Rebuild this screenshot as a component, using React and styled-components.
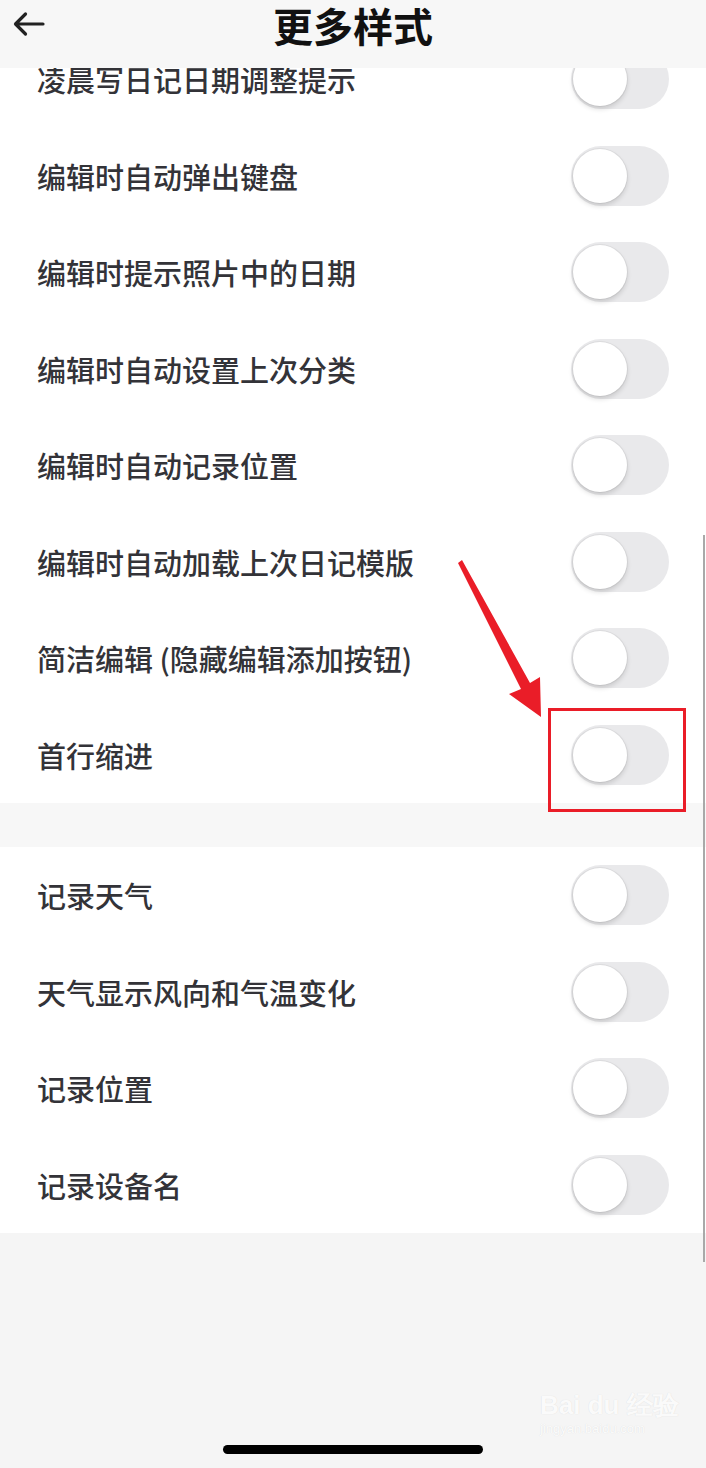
import styled, { createGlobalStyle } from "styled-components";

const Global = createGlobalStyle`
  html, body {
    margin: 0;
    padding: 0;
    background: #f5f5f5;
  }
  * {
    box-sizing: border-box;
  }
`;

const Screen = styled.div`
  position: relative;
  width: 706px;
  height: 1468px;
  overflow: hidden;
  background: #f5f5f5;
  font-family: "Noto Sans CJK SC", "Noto Sans", sans-serif;
  display: flex;
  flex-direction: column;
`;

const Header = styled.header`
  position: relative;
  z-index: 2;
  flex: 0 0 68px;
  height: 68px;
  background: #f7f7f7;
  display: flex;
  align-items: flex-start;
  justify-content: center;
  padding-top: 4px;
`;

const Back = styled.button`
  position: absolute;
  left: 10px;
  top: 6px;
  width: 36px;
  height: 36px;
  padding: 0;
  border: none;
  background: transparent;
  display: flex;
  align-items: center;
  justify-content: center;
`;

const Title = styled.h1`
  margin: 0;
  font-size: 40px;
  font-weight: 700;
  color: #111;
  line-height: 42px;
`;

const Body = styled.div`
  flex: 1;
  overflow: hidden;
  display: flex;
  flex-direction: column;
`;

const Section = styled.section`
  background: #fff;
  margin-top: ${(p) => p.$offset || 0}px;
`;

const Gap = styled.div`
  height: 44px;
  background: #f7f7f7;
`;

const Row = styled.div`
  height: 96.5px;
  display: flex;
  align-items: center;
  justify-content: space-between;
  padding: 0 37px 0 37px;
`;

const Label = styled.span`
  font-size: 29px;
  font-weight: 500;
  color: #333338;
`;

const Track = styled.div`
  width: 98px;
  height: 60px;
  border-radius: 30px;
  background: #e9e9eb;
  position: relative;
  flex: 0 0 auto;
`;

const Knob = styled.div`
  position: absolute;
  left: 2px;
  top: 3px;
  width: 54px;
  height: 54px;
  border-radius: 50%;
  background: #fff;
  box-shadow: 0 0 0 1px rgba(0, 0, 0, 0.05), 0 3px 5px rgba(0, 0, 0, 0.14);
`;

const HomeBar = styled.div`
  position: absolute;
  left: 223px;
  top: 1445px;
  width: 260px;
  height: 9px;
  border-radius: 5px;
  background: #000;
`;

const Scrollbar = styled.div`
  position: absolute;
  left: 703px;
  top: 535px;
  width: 2px;
  height: 727px;
  background: #a9a9a9;
  z-index: 3;
`;

const Highlight = styled.div`
  position: absolute;
  left: 548px;
  top: 708px;
  width: 138px;
  height: 104px;
  border: 3px solid #ea1d28;
  z-index: 3;
`;

const Arrow = styled.svg`
  position: absolute;
  left: 0;
  top: 0;
  z-index: 3;
  pointer-events: none;
`;

const Watermark = styled.div`
  position: absolute;
  left: 540px;
  top: 1392px;
  color: rgba(255, 255, 255, 0.9);
  text-shadow: 0 0 1px rgba(0, 0, 0, 0.12);
  font-family: "Liberation Sans", sans-serif;
  line-height: 1;
  z-index: 3;
`;

const MarkMain = styled.div`
  font-size: 26px;
  font-weight: 700;
`;

const MarkSub = styled.div`
  font-size: 13px;
  margin-top: 4px;
`;

function Toggle() {
  return (
    <Track>
      <Knob />
    </Track>
  );
}

const first = [
  "凌晨写日记日期调整提示",
  "编辑时自动弹出键盘",
  "编辑时提示照片中的日期",
  "编辑时自动设置上次分类",
  "编辑时自动记录位置",
  "编辑时自动加载上次日记模版",
  "简洁编辑 (隐藏编辑添加按钮)",
  "首行缩进",
];

const second = ["记录天气", "天气显示风向和气温变化", "记录位置", "记录设备名"];

export default function App() {
  return (
    <>
      <Global />
      <Screen>
        <Header>
          <Back aria-label="back">
            <svg width="36" height="36" viewBox="0 0 36 36" fill="none">
              <path
                d="M33 18H6M15.5 8L5.5 18l10 10"
                stroke="#222"
                strokeWidth="3.2"
                strokeLinecap="round"
                strokeLinejoin="round"
              />
            </svg>
          </Back>
          <Title>更多样式</Title>
        </Header>
        <Body>
          <Section $offset={-37}>
            {first.map((t) => (
              <Row key={t}>
                <Label>{t}</Label>
                <Toggle />
              </Row>
            ))}
          </Section>
          <Gap />
          <Section>
            {second.map((t) => (
              <Row key={t}>
                <Label>{t}</Label>
                <Toggle />
              </Row>
            ))}
          </Section>
        </Body>
        <Scrollbar />
        <Highlight />
        <Arrow width="706" height="1468" viewBox="0 0 706 1468">
          <polygon
            points="458,563 462,560 530,683 540,677 541,717 509,694 521,689"
            fill="#ea1d28"
          />
        </Arrow>
        <Watermark>
          <MarkMain>Bai du 经验</MarkMain>
          <MarkSub>jingyan.baidu.com</MarkSub>
        </Watermark>
        <HomeBar />
      </Screen>
    </>
  );
}
